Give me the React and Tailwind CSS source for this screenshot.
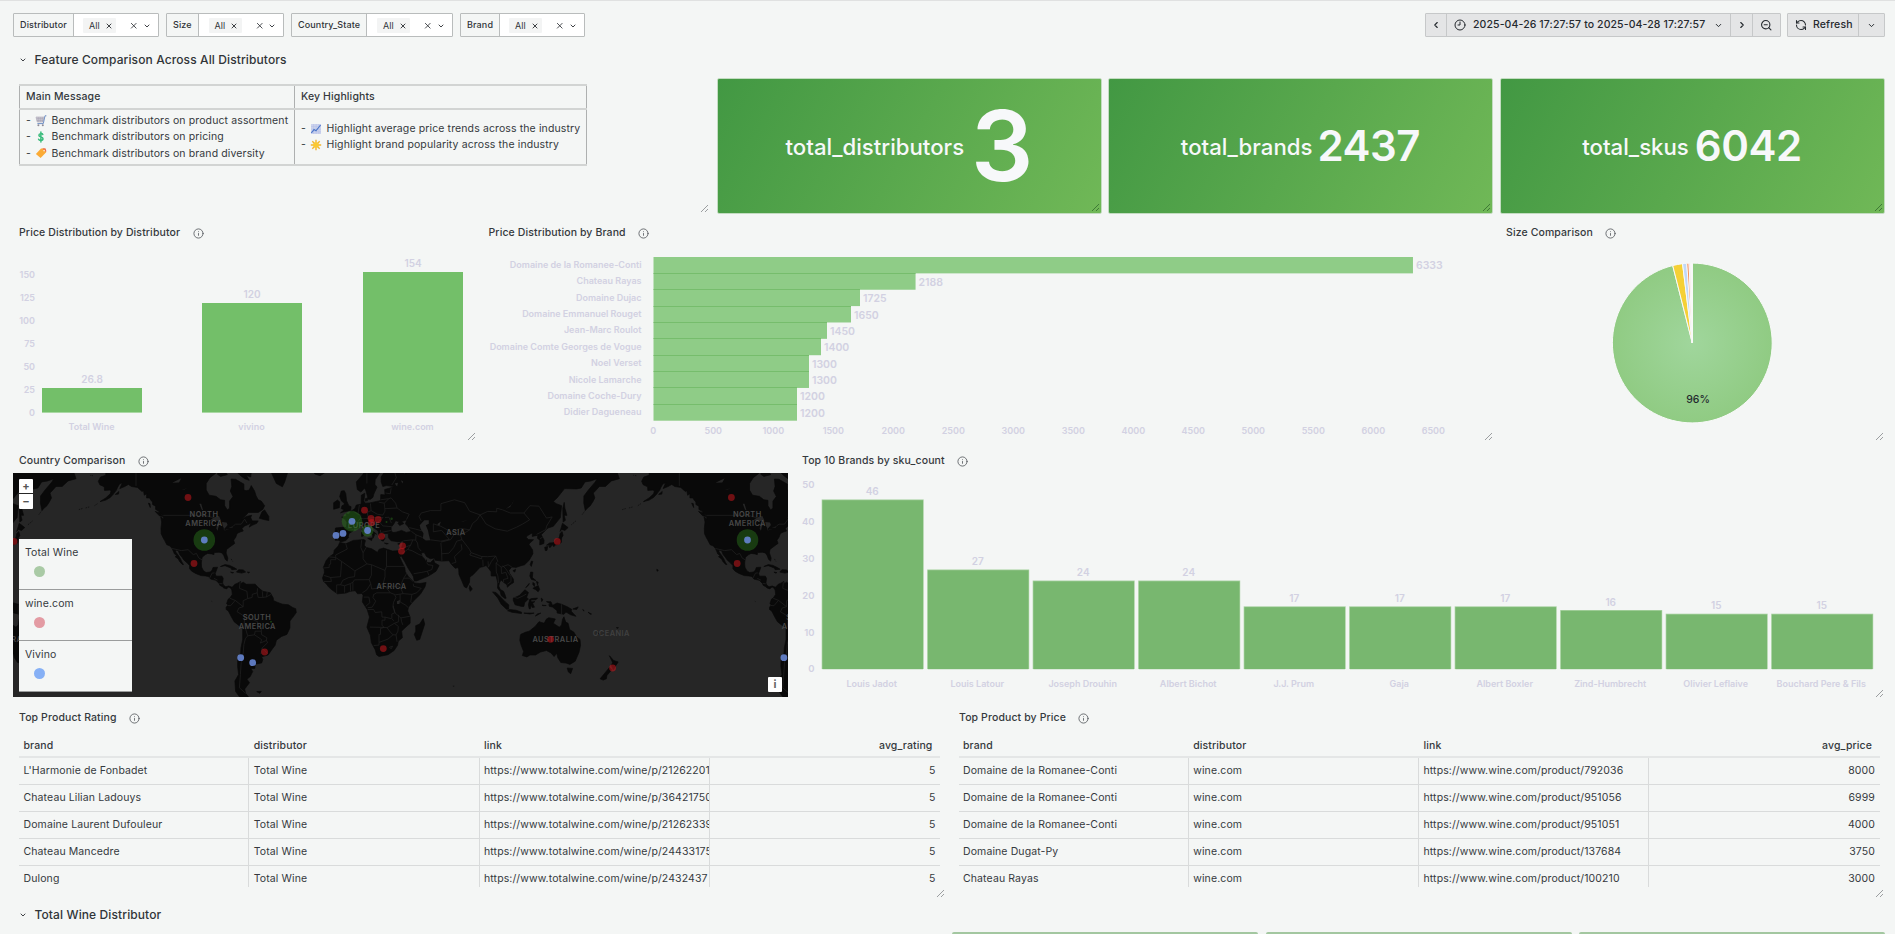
import React from "react";
import { ChevronDown, ChevronLeft, ChevronRight, Clock9, Info, RefreshCw, X, ZoomOut } from "lucide-react";

/* ---------- shared pieces ---------- */

function Handle({ dark = false }) {
  return (
    <svg className="absolute right-[1px] bottom-[1px]" width="9" height="9" viewBox="0 0 9 9" fill="none" stroke={dark ? "#3f7a36" : "#9b9ea0"} strokeWidth="1">
      <path d="M1 8 L8 1 M5 8 L8 5" />
    </svg>
  );
}

function Panel({ title, indent = "pl-[6px]", children }) {
  return (
    <section className="relative min-w-0 overflow-hidden">
      <header className={"flex h-6 items-center gap-[12.5px] pt-[2px] text-[10.5px] font-medium tracking-[0.11px] text-[#35393d] " + indent}>
        <h2>{title}</h2>
        <Info size={11} strokeWidth={1.8} className="text-[#54585c]" />
      </header>
      {children}
    </section>
  );
}

function T({ x, y, size = 9, anchor = "middle", weight = 600, fill = "#d2d1e2", children }) {
  return (
    <text x={x} y={y + size * 0.36} fontSize={size} textAnchor={anchor} fontWeight={weight} fill={fill}>
      {children}
    </text>
  );
}

/* ---------- toolbar ---------- */

function Filter({ label, labelClass, boxClass }) {
  return (
    <div className="flex h-6 rounded-[1px] border border-[#b9bcbc] text-[9px] text-[#303438]">
      <div className={"flex items-center border-r border-[#b9bcbc] pl-[6px] font-medium tracking-[0.13px] " + labelClass}>{label}</div>
      <div className={"flex items-center bg-white pt-[1px] " + boxClass}>
        <span className="flex h-[15px] w-[33px] items-center gap-[5px] rounded-[1px] bg-[#f3f4f4] pl-[6px]">
          All
          <X size={8} strokeWidth={2.8} />
        </span>
        <X size={9.5} strokeWidth={2.2} className="ml-[13px]" />
        <ChevronDown size={8} strokeWidth={2.8} className="ml-[4px]" />
      </div>
    </div>
  );
}

function Toolbar() {
  return (
    <div className="flex h-[36px] items-start justify-between pt-3 text-[#24292e]">
      <div className="flex gap-[7px]">
        <Filter label="Distributor" labelClass="w-[60px]" boxClass="w-[84px] pl-[9px]" />
        <Filter label="Size" labelClass="w-[32px]" boxClass="w-[84px] pl-[9.5px]" />
        <Filter label="Country_State" labelClass="w-[75px]" boxClass="w-[85px] pl-[10px]" />
        <Filter label="Brand" labelClass="w-[39px]" boxClass="w-[84px] pl-[9px]" />
      </div>
      <div className="flex gap-[6px]">
        <div className="flex h-6 divide-x divide-[#c6c8c9] rounded-[1px] border border-[#c6c8c9] bg-[#e4e5e6] text-[10.5px] font-medium tracking-[0.11px]">
          <span className="flex w-[21px] items-center justify-center"><ChevronLeft size={10} strokeWidth={2.6} /></span>
          <span className="flex w-[284px] items-center pl-[7px]">
            <Clock9 size={12} strokeWidth={2} />
            <span className="ml-[7px] w-[233px] whitespace-nowrap">2025-04-26 17:27:57 to 2025-04-28 17:27:57</span>
            <ChevronDown size={9} strokeWidth={2.6} className="ml-[8px]" />
          </span>
          <span className="flex w-[22px] items-center justify-center"><ChevronRight size={10} strokeWidth={2.6} /></span>
          <span className="flex w-[27px] items-center justify-center"><ZoomOut size={12.5} strokeWidth={2.1} /></span>
        </div>
        <div className="flex h-6 divide-x divide-[#c6c8c9] rounded-[1px] border border-[#c6c8c9] bg-[#e4e5e6] text-[10.5px] font-medium tracking-[0.11px]">
          <span className="flex w-[71px] items-center gap-[6px] pl-[7px]">
            <RefreshCw size={12} strokeWidth={2.1} className="-scale-x-100" />
            Refresh
          </span>
          <span className="flex w-[25px] items-center justify-center"><ChevronDown size={9} strokeWidth={2.6} /></span>
        </div>
      </div>
    </div>
  );
}

function RowTitle({ children }) {
  return (
    <div className="flex h-[23px] items-center gap-[7.5px] pl-[6px] text-[12px] font-medium tracking-[0.11px] text-[#303438]">
      <ChevronDown size={8} strokeWidth={2.8} />
      <h1>{children}</h1>
    </div>
  );
}

/* ---------- message table ---------- */

const Cart = () => (
  <svg width="12" height="12" viewBox="0 0 12 12" fill="none" className="shrink-0">
    <path d="M1 2 H9 L8 7 H2.2 Z" fill="#d4d1da" stroke="#aba8b6" strokeWidth=".6" />
    <path d="M3.2 2 V7 M5.2 2 V7 M7.2 2 V7 M1.5 3.7 H8.5 M1.8 5.4 H8.3" stroke="#9b98a8" strokeWidth=".5" />
    <path d="M11.4 .8 H10 L8.3 8.6 H2.4" stroke="#6f8fc4" strokeWidth="1" />
    <circle cx="3.4" cy="10.2" r="1" fill="#8d8a96" />
    <circle cx="7.8" cy="10.2" r="1" fill="#8d8a96" />
  </svg>
);
const Dollar = () => (
  <svg width="12" height="12" viewBox="0 0 12 12" fill="none" stroke="#39bb7b" strokeWidth="1.5" strokeLinecap="round" className="shrink-0">
    <path d="M7.8 3.6 C7.3 2.3 3.9 2.1 3.9 4.2 C3.9 6.3 8 5.5 8 7.8 C8 10 4.1 9.7 3.6 8.2 M5.9 .9 V11.1" />
  </svg>
);
const Tag = () => (
  <svg width="12" height="12" viewBox="0 0 12 12" className="shrink-0">
    <path d="M6 1.6 L10 1.6 L11.2 5.2 L5.6 11 L.9 7.1 Z" fill="#fbab35" />
    <path d="M7.4 1.2 L10.6 1.4 L11.5 4.6 L9.8 4.4 Z" fill="#ee6a4c" />
    <circle cx="9.1" cy="3.6" r=".9" fill="#fde7c4" />
  </svg>
);
const Trend = () => (
  <svg width="12" height="12" viewBox="0 0 12 12" fill="none" className="shrink-0">
    <rect x="1" y="1" width="10" height="10" fill="#ccd3ee" />
    <path d="M3.6 1 V11 M6.2 1 V11 M8.8 1 V11 M1 3.6 H11 M1 6.2 H11 M1 8.8 H11" stroke="#b3bce4" strokeWidth=".5" />
    <path d="M1.3 10 L4 6.6 L6 7.8 L10.6 2" stroke="#4a76c9" strokeWidth="1.2" />
  </svg>
);
const Star = () => (
  <svg width="12" height="12" viewBox="0 0 12 12" fill="none" className="shrink-0">
    <path d="M6 .8 V11.2 M.8 6 H11.2 M2.3 2.3 L9.7 9.7 M9.7 2.3 L2.3 9.7" stroke="#f2b62c" strokeWidth="1.4" />
    <circle cx="6" cy="6" r="2.8" fill="#fbc931" />
  </svg>
);

function Bullet({ icon, children }) {
  return (
    <li className="flex h-[16.4px] items-center whitespace-nowrap">
      <span className="w-[9px]">-</span>
      {icon}
      <span className="ml-[4.5px]">{children}</span>
    </li>
  );
}

function Messages() {
  return (
    <section className="relative pt-[6px] pl-[6px]">
      <table className="h-[82px] w-[568px] border-collapse text-[10.5px] tracking-[0.12px] text-[#35393d]">
        <thead>
          <tr className="h-[24px] text-left">
            <th className="w-[275px] border-x border-y-2 border-x-[#aeb0b0] border-y-[#d2d4d3] pl-[6px] font-medium">Main Message</th>
            <th className="border-x border-y-2 border-x-[#aeb0b0] border-y-[#d2d4d3] pl-[6px] font-medium">Key Highlights</th>
          </tr>
        </thead>
        <tbody>
          <tr>
            <td className="border-x border-b-2 border-x-[#aeb0b0] border-b-[#d2d4d3] pl-[6px]">
              <ul>
                <Bullet icon={<Cart />}>Benchmark distributors on product assortment</Bullet>
                <Bullet icon={<Dollar />}>Benchmark distributors on pricing</Bullet>
                <Bullet icon={<Tag />}>Benchmark distributors on brand diversity</Bullet>
              </ul>
            </td>
            <td className="border-x border-b-2 border-x-[#aeb0b0] border-b-[#d2d4d3] pl-[6px]">
              <ul>
                <Bullet icon={<Trend />}>Highlight average price trends across the industry</Bullet>
                <Bullet icon={<Star />}>Highlight brand popularity across the industry</Bullet>
              </ul>
            </td>
          </tr>
        </tbody>
      </table>
      <Handle />
    </section>
  );
}

function Stat({ label, value, valueClass }) {
  return (
    <section className="relative flex items-center justify-center overflow-hidden rounded-[2px] border border-[#c3dcc1] bg-[linear-gradient(120deg,#429843,#70b857)] font-medium text-[#f7f8fa]">
      <span className="pt-[2px] text-[22.2px]">{label}</span>
      <span className={"leading-none font-semibold " + valueClass}>{value}</span>
      <Handle dark />
    </section>
  );
}

/* ---------- charts ---------- */

function DistributorChart() {
  const bars = [
    ["Total Wine", "26.8", 42, 388],
    ["vivino", "120", 202, 303],
    ["wine.com", "154", 363, 272],
  ];
  return (
    <Panel title="Price Distribution by Distributor">
      <svg className="block" width="464" height="198" viewBox="13 244 464 198">
        {[0, 25, 50, 75, 100, 125, 150].map((v) => (
          <T key={v} x={35} y={413 - v * 0.92} anchor="end">{v}</T>
        ))}
        {bars.map(([name, v, x, y]) => (
          <g key={name}>
            <rect x={x} y={y} width="100" height={412 - y} fill="#73bf69" />
            <rect x={x} y="412" width="100" height="1" fill="#a9d8a3" />
            <T x={x + 50} y={y - 8.5} size={10}>{v}</T>
            <T x={x + 49.5} y={427}>{name}</T>
          </g>
        ))}
      </svg>
      <Handle />
    </Panel>
  );
}

function BrandPriceChart() {
  const rows = [
    ["Domaine de la Romanee-Conti", 6333],
    ["Chateau Rayas", 2188],
    ["Domaine Dujac", 1725],
    ["Domaine Emmanuel Rouget", 1650],
    ["Jean-Marc Roulot", 1450],
    ["Domaine Comte Georges de Vogue", 1400],
    ["Noel Verset", 1300],
    ["Nicole Lamarche", 1300],
    ["Domaine Coche-Dury", 1200],
    ["Didier Dagueneau", 1200],
  ];
  const ticks = Array.from({ length: 14 }, (_, i) => i * 500);
  return (
    <Panel title="Price Distribution by Brand" indent="pl-[5.5px]">
      <svg className="block" width="1011" height="198" viewBox="483 244 1011 198">
        {rows.map(([name, v], i) => {
          const y = 257 + i * 16.37;
          return (
            <g key={name}>
              <rect x="653.5" y={y} width={v * 0.12 - 0.5} height="16.37" fill="#8fcc87" />
              {i > 0 && <rect x="653.5" y={Math.round(y - 0.5)} width={v * 0.12 - 0.5} height="1" fill="#76bd6c" />}
              <T x={641.5} y={y + 7.7} anchor="end">{name}</T>
              <T x={656 + v * 0.12} y={y + 8.7} size={10.5} anchor="start">{v}</T>
            </g>
          );
        })}
        {ticks.map((v) => (
          <T key={v} x={653.3 + v * 0.12} y={430.8}>{v}</T>
        ))}
      </svg>
      <Handle />
    </Panel>
  );
}

function SizePie() {
  const cx = 1692.3, cy = 343, r = 79.9;
  const pt = (deg) => {
    const a = (deg * Math.PI) / 180;
    return (cx + r * Math.sin(a)).toFixed(2) + " " + (cy - r * Math.cos(a)).toFixed(2);
  };
  const slices = [
    [0, 345.8, "url(#pieGreen)"],
    [345.8, 353, "#f5d036"],
    [353, 356, "#c0d8f8"],
    [356, 357.7, "#f4935f"],
    [357.7, 358.8, "#f6c4c4"],
    [358.8, 359.5, "#d8cdf0"],
    [359.5, 360, "#f8f8f8"],
  ];
  return (
    <Panel title="Size Comparison">
      <svg className="block" width="385" height="198" viewBox="1500 244 385 198">
        <defs>
          <radialGradient id="pieGreen" gradientUnits="userSpaceOnUse" cx={cx} cy={cy} r={r}>
            <stop offset="0" stopColor="#a0d69c" />
            <stop offset="1" stopColor="#90cb83" />
          </radialGradient>
        </defs>
        {slices.map(([a, b, fill]) => (
          <path key={a} d={`M${cx} ${cy} L${pt(a)} A${r} ${r} 0 ${b - a > 180 ? 1 : 0} 1 ${pt(b)} Z`} fill={fill} stroke="#f9faf9" strokeWidth="1" />
        ))}
        <T x={1698} y={399.2} size={10.5} weight={500} fill="#24292e">96%</T>
      </svg>
      <Handle />
    </Panel>
  );
}

function SkuChart() {
  const data = [
    ["Louis Jadot", 46], ["Louis Latour", 27], ["Joseph Drouhin", 24], ["Albert Bichot", 24], ["J.J. Prum", 17],
    ["Gaja", 17], ["Albert Boxler", 17], ["Zind-Humbrecht", 16], ["Olivier Leflaive", 15], ["Bouchard Pere & Fils", 15],
  ];
  return (
    <Panel title="Top 10 Brands by sku_count" indent="pl-[7px]">
      <svg className="block" width="1090" height="227" viewBox="795 472 1090 227">
        {[0, 10, 20, 30, 40, 50].map((v) => (
          <T key={v} x={814.5} y={669 - v * 3.686} size={9.5} weight={600} anchor="end">{v}</T>
        ))}
        {data.map(([name, v], i) => {
          const x = 821.7 + i * 105.5;
          const top = 669 - v * 3.686;
          return (
            <g key={name}>
              <rect x={x} y={top} width="102" height={669 - top} fill="#a6d19f" />
              <rect x={x + 0.7} y={top + 0.8} width="100.6" height={668.4 - top} fill="#78b76f" />
              <T x={x + 50.5} y={top - 8} size={10}>{v}</T>
              <T x={x + 50} y={684}>{name}</T>
            </g>
          );
        })}
      </svg>
      <Handle />
    </Panel>
  );
}

/* ---------- world map ---------- */

const PERIOD = 543.33;
const px = (lon) => 348.8 + (lon * PERIOD) / 360;
const py = (lat) => 600.4 - 86.47 * Math.log(Math.tan(Math.PI / 4 + (lat * Math.PI) / 360));
function line(flat) {
  let d = "";
  for (let i = 0; i < flat.length; i += 2) d += (i ? "L" : "M") + px(flat[i]).toFixed(1) + " " + py(flat[i + 1]).toFixed(1);
  return d;
}

const LAND = [
  // North and Central America
  [-168,66,-162,66.5,-163,64.5,-161,64.5,-161,63.5,-164.5,63,-166,61.7,-165,60.6,-162,59.9,-161.9,58.7,-158.5,58.8,-157.5,58.6,-158,57.5,-161,56,-164.8,54.6,-161,55.2,-158,56.2,-156,57.4,-154,58.8,-153.3,59.6,-152,60.8,-150,61.2,-151.7,59.3,-148.5,60,-146,60.7,-144,60,-140,59.7,-137,58.3,-136,58.6,-135.5,57,-134,57.5,-134,56,-132,56,-131,55,-130,54.5,-130,53.5,-128,52.8,-128,51.5,-126,50.8,-125,50,-123.3,49,-122.5,47.3,-124.6,48.3,-124,46,-124.4,43,-124.3,40.3,-123,38.2,-122,36.8,-120.6,34.6,-118.4,33.9,-117.1,32.5,-116,30.5,-115.6,29.5,-114,28.5,-115,27.8,-113,26.5,-112.2,25,-110.3,23.2,-109.5,23.1,-110.5,24.5,-111.5,26.5,-112.8,28.3,-114.7,30.5,-114.8,31.7,-113,31.2,-112,29,-110.5,27.5,-109.3,25.9,-107,24,-105.5,22.5,-105.5,20.5,-104,19,-101.5,17.6,-98,16.2,-95,16,-93,15.7,-91.5,14,-88,13.2,-87.5,12.8,-85.8,11,-85.5,10,-83.7,9,-82.8,8.2,-81,7.6,-80.3,8.4,-79.5,8.9,-78.4,8.2,-77.4,7,-77,8.6,-79.5,9.5,-81.5,9,-83,10,-83.6,11.5,-83.2,14.5,-84,15.8,-88,15.8,-88.5,17.5,-87.5,20,-87,21.5,-90,21.3,-90.6,19.7,-91.8,18.5,-94.5,18.2,-96.2,19.2,-97.5,21.5,-97.7,24,-97.2,27.5,-95,29,-93.5,29.7,-91,29.4,-89.3,29,-89.3,30.2,-86,30.4,-84,30,-82.8,28.5,-81.8,26.2,-80.5,25.2,-80.2,27,-81.3,30,-81,32,-78,33.9,-75.6,35.3,-76.3,37,-75,38.5,-74,40.5,-72,41.2,-70,41.7,-70.8,43,-69,44.2,-66.8,44.8,-64.8,45.6,-66,43.6,-64,44.5,-61,45.4,-60,46.5,-64,46.5,-65,48,-64.4,49,-68,48.5,-71,47,-66.5,50.2,-60,50.2,-57,51.5,-55.8,53,-58,54.8,-60,55.3,-61.5,56.8,-62.5,58.5,-64.6,60.3,-66,58.8,-68,58.6,-69.5,58.8,-69.5,60.8,-71,61.2,-75,62.3,-78,62.4,-77.5,60,-78.5,58.5,-76.7,56.5,-79,54.8,-79,52,-80.5,51.3,-82.3,53,-82.3,55.1,-85,55.3,-88,56.6,-92.5,57,-94.5,58.8,-94.5,61,-92,62.8,-88,64.2,-86,66,-90,68,-100,70,-130,71,-168,71],
  [-84,66,-81,64,-80.5,63.7,-85,63.2,-87,63.8,-86,66],
  [-78,64.6,-74,64.4,-72,63.5,-69,62.5,-66,62,-68,63.5,-65,63,-64.5,64.8,-62,66,-70,70,-85,70],
  [-59.3,47.7,-55.5,47,-53,46.7,-53,48.5,-55.8,51.3,-57.5,50.5],
  [-128.3,50.7,-125,50,-123.4,48.5,-125.5,48.8],
  [-132.8,54,-131.7,53.8,-131.5,52.3],
  [-154.7,57.3,-152.3,58.3,-152.6,57.4],
  [-85,21.9,-82,23.1,-79,22.6,-76,21.2,-74.2,20.2,-77.5,19.9,-78,20.9,-82,22.4],
  [-74.4,18.4,-73,19.9,-70,19.8,-68.4,18.5,-71,17.8],
  [-78.3,18.4,-76.3,18.1,-77.3,17.8],
  [-67.2,18.4,-65.7,18.3,-66.5,17.9],
  [-54,67,-51,64,-48,61,-44,59.9,-42.5,61.5,-40,65,-38,68],
  [-24,65.5,-22.5,63.9,-19,63.4,-14,64.8,-14,66.5,-22,66.5],
  // South America
  [-77.4,8.6,-75.5,10.6,-74,11.2,-71.7,12.4,-71.5,11,-70,12,-68,10.6,-62,10.7,-60,8.5,-57,6,-52,5,-50,1.5,-50,0,-48,-1,-44,-2.5,-40,-2.9,-37,-4.8,-35.2,-5.5,-34.8,-8,-37,-11,-39,-13.5,-39,-18,-41,-22,-44.5,-23.2,-48,-25.5,-48.8,-28.5,-51,-31,-53.5,-34,-57.5,-34.9,-58.4,-34,-57,-36.5,-57.7,-38.2,-62,-38.9,-62.3,-41,-65,-41,-63.7,-42.5,-65.3,-45,-67.5,-46.2,-65.8,-47.8,-69,-50.5,-68.4,-52.3,-65.2,-54.7,-68,-55.5,-72,-54,-75,-51.5,-75.5,-47,-73,-44,-73.7,-40,-73.6,-37,-71.6,-33,-71.4,-30,-70.3,-25,-70.3,-18.3,-72,-17,-76,-14,-78,-10.5,-79.8,-7,-81.2,-6,-81.2,-4.5,-80,-3,-81,-2.2,-80,0.8,-78.8,1.5,-77.2,4,-77.5,7],
  [-61,-51.6,-58,-51.5,-59,-52.3],
  // Africa
  [-6,35.8,-2,35.1,3,36.9,10,37.3,11,36.8,10.2,34.3,11.5,33.1,15.2,32.3,19,30.3,20,32,23,32.7,29,31,32.3,31.2,32.6,29.9,34,27,35.5,24,37.2,21,37.4,18.8,39.5,15.5,43,12.3,43.3,11.5,47,11.1,51.2,11.8,50.5,9,47.5,4.2,42.5,-0.8,39.5,-4.5,39,-7,40.6,-11,40.6,-15,36.5,-18.5,35,-20,35.5,-24,32.8,-26,32.3,-28.5,30,-31.5,26,-33.8,20,-34.8,18.4,-33.9,17.5,-31,15,-27,14.3,-22.5,12,-17.5,13.7,-11,12.2,-6,9,-1,9.5,3.5,8.5,4.6,5.8,4.4,4.3,6.4,1,6,-2,4.8,-7.5,4.4,-11,6.8,-13.3,8.8,-15,11,-16.7,12.5,-17.4,14.7,-16.2,18,-16.3,20.5,-17,21,-15,25.5,-13,27.7,-10,29.5,-9.7,31.5,-7,33.8],
  [49.3,-12,50.3,-15.5,47,-25,45,-25.5,43.4,-22,44.4,-20,44.3,-16.5,47,-15.5],
  // Eurasia
  [-9,37,-8.8,38.6,-9.4,39,-8.8,43.2,-4,43.5,-1.6,43.4,-1.2,45.8,-2.5,47.3,-4.7,48.2,-1.6,48.7,-1.8,49.7,0,49.5,1.6,50.8,4,51.8,5,53.3,8.2,53.6,8.3,57,10.6,57.7,10.3,56,9.9,54.8,11,54,14,54.1,18.5,54.7,21,55,21.2,57.2,24,57.1,23.8,59,28,59.6,30,60,25,60.3,22.5,60,21.5,61.5,21.4,63,24.5,65,22,65.7,21,64.5,17.5,62.2,17.3,60.7,18.7,59.8,16.6,57.5,16,56.2,14.3,55.5,12.9,55.5,11.3,58.6,10.5,59.5,8,58.1,5.6,59,5,61.5,9,63.6,13,66,20,70,34,66.5,40,66,38,64,36,64.3,37,63.8,40,64.7,42,66.5,60,72,180,72,190,66.5,187.5,64.4,180,65,177.5,64.7,179.3,62.5,174,61.8,170,60,166,60,163.3,58.5,162,57.8,163,56,161.8,54.7,160,53,158,52,156.7,51,155.7,54,155.8,56.7,159,59,163.3,61.5,164.5,62.5,160.5,61.8,156.5,61.5,154,59.5,151,59.2,143,59.3,138,56,135.5,54.7,137.5,53.8,141,53,140.5,50,140.2,48,135.5,44,132,43.2,130.7,42.3,127.5,39.8,129.4,37,129.2,35.2,126.5,34.5,126.6,37,125,38,125.2,39.6,121.5,39,121.7,40.8,118,39.2,117.7,38.5,119,37.3,122.4,37.2,120,35.5,119.3,34.8,121.8,31.7,122,29.5,119.5,25.7,116.5,23,113.5,22.2,110.5,21.2,109.7,21.5,108,21.6,106,19.5,106.5,17.7,109,14,109.2,11.8,107,10.4,105,8.7,104.8,10.3,102.5,12,100.9,13.4,100,12,99.3,9.5,100.4,7.2,102.5,6,103.4,4,104.2,1.4,103.3,1.4,101,3.2,100.3,5.8,98.5,8.2,98.7,11.5,97.6,16,95.3,15.9,94.3,16,94.3,18.7,92,21.5,91,22.5,89,21.8,87,21.4,85,19.5,82.3,16.7,80.2,15.3,80,12,79,10,78,8.2,76.5,9,74.8,13,73,17,72.8,20,72.5,21.3,70.5,20.8,69,22.3,67.5,23.8,66.5,25.4,61.6,25.2,57.3,25.7,56.5,27,54,26.6,51.5,27.9,50,30.2,48,30,48.5,28,50.2,26.5,50.8,24.8,51.4,26,51.6,24.3,54,24.2,56.3,26.2,56.8,24.2,59.8,22.5,57.8,19,55,17.2,52,15.6,48,14,45,12.8,43.4,12.7,42.8,15.5,42,17,39.2,21,37,25,35,28,34.9,29.4,34.3,27.8,32.6,29.9,32.4,31.2,34.3,31.3,35,33,35.9,35.5,36.1,36.8,34,36.2,32,36.2,30.5,36.5,28,36.7,26.3,38.3,26.2,40,29,40.9,31.3,41.1,35,42,38,41,41.5,41.5,39,44,37.5,45.2,38.5,47,35,46.2,36.5,45.3,33.7,44.4,32.5,45.4,33.5,46.1,31,46.6,29.7,45,28,43.5,28,41.8,29,41.1,26.5,40.4,23.5,40.5,22.8,40,24,38,22.8,36.5,21.5,37,20,39.5,19.4,41.8,15.5,43.8,13.8,45,12.4,45.3,12.4,44.2,14,42.5,16,41.6,18.4,40.1,17,40.5,16.8,39.3,16,38,15.8,39.6,13.7,41.2,11,42.4,8.8,44.4,6.5,43.1,3.2,43.2,3,41.8,0.2,40.5,-0.3,39,0,38.6,-2,36.8,-5.5,36.1,-6.5,37],
  [-5.5,50.1,-3,50.5,1.2,51.1,1.5,52.6,0,53,-1.5,55,-2,57.5,-3,58.6,-5,58.5,-6,56.5,-4.8,54.8,-3,54,-3.2,53.3,-4.5,53,-5,51.8,-3,51.4],
  [-10,51.6,-6.3,52.2,-6,54.5,-7.5,55.2,-10,54.2],
  [11,54.8,12.4,55,12.5,56,11,55.7],
  [12.5,38,15.6,38.2,15.1,36.8],
  [8.4,41,9.6,41,9.6,39.2,8.5,39],
  [8.7,42.6,9.4,43,9.4,41.5],
  [23.6,35.5,26.2,35.2,25,34.9],
  [32.4,35,34.4,35.6,33.5,34.7],
  // Asia-Pacific islands
  [131,34.3,133,35.5,136,35.7,137,37.2,139.5,38.3,140,40.5,141.3,41.4,142,39.5,141,38.2,140.8,35.8,139,34.8,136.8,34.5,135.8,33.5,135,34.6],
  [129.8,33.2,131.8,33.6,131.3,31.4,130.2,31.3],
  [132.5,34,134.6,34.2,133.2,32.9],
  [140,41.5,141.6,45.4,145.3,43.4,143.2,42,141,42.5],
  [142,46,143.5,46.8,142.7,49,144.5,49,143.2,52,142.7,54.3,141.8,52],
  [120.2,23,121,25.2,121.9,25,120.9,22],
  [108.7,19.3,110.5,20.1,110,18.4],
  [79.8,8,80.2,9.8,81.8,7.5,80.5,6],
  [120.5,18.5,122,18.3,121.6,15,124,13,121,13.8,119.9,16],
  [122,8,125.5,9.8,126.4,7.2,125.4,5.7,124,7],
  [122,11.8,123.2,11,123,9.2,122,10.5],
  [124.3,12.5,125.5,12,125,10.2],
  [117.2,8.4,119.5,11.2,119.3,10.3],
  [109,1.5,111.5,2.5,113,3.2,116.7,7,119,5.2,117.8,2,119,1,116.5,-1.5,116,-4,114.5,-4,110.2,-2.9,109,0],
  [120.3,-5.5,119.5,-5.5,119,-3,119.8,0.5,121,1.2,125,1.5,124,0.4,120.5,0.4,121,-1,123.3,-0.8,121.8,-1.9,123,-4.5,121.5,-4.7,120.8,-2.8],
  [95.3,5.6,97.5,5.2,100.5,2.2,103.7,-1,106,-3,105.8,-5.8,104.5,-5.8,101,-2.5,98.7,1.6],
  [105.2,-6.8,106.5,-6,110.8,-6.5,114.5,-7.8,114.4,-8.7,108,-7.8],
  [116,-8.4,119,-8.4,122.8,-8.4,120,-9],
  [123.6,-10.3,125,-8.9,127.2,-8.4,125,-9.6],
  [127.5,1.5,128.6,0.5,127.8,-0.8],
  [128,-3.2,130.8,-3.4,129,-3.5],
  [131,-0.8,134,-0.9,135,-3.3,138,-1.7,141,-2.6,145,-4.3,147.8,-6,147.2,-7,150.5,-10.5,147,-9.5,144,-7.7,142.5,-9.2,138,-8.3,138,-6.8,135,-4.4,133,-4,132.5,-2.8,134,-2.5],
  [148.5,-5.7,152,-4.3,151,-6],
  [155,-6,156,-6.8,155.5,-6.9],
  [158.5,-7.8,160.8,-9,160,-9.2],
  [164,-20.2,167,-22.2,166,-22],
  [177.3,-17.8,178.6,-17.8,178,-18.2],
  // Australia and New Zealand
  [113.7,-22.5,114,-21.9,117,-20.7,119.5,-20,122.2,-18,123.5,-17,126,-14,129.5,-15,130.8,-12.4,132.5,-11.4,136.8,-12.2,135.5,-15,139.5,-17.5,141,-16,141.6,-12.5,142.5,-10.8,143.7,-14.2,145.3,-15,146.3,-19,149,-20.5,151,-23.5,153.2,-25,153.5,-28.5,152.5,-32.5,150,-37.3,146.5,-39,144,-38.3,140.5,-38,138.5,-35.5,137.8,-33,136,-34.8,134,-32.8,131,-31.5,127,-32.3,123.7,-34,120,-34,118,-35,115,-34.3,115.8,-32,114.2,-28.5,113.3,-25.5],
  [144.7,-40.8,148.3,-41,147,-43.6,145.5,-42.8],
  [172.7,-34.4,175.5,-37,178.5,-37.7,177,-39.5,175.3,-41.6,174,-39.5,174.8,-38],
  [172.7,-40.6,174.2,-41.7,171,-44.5,170.7,-46,168.5,-46.6,166.5,-46,170,-43],
  [-155.9,20.2,-154.9,19.5,-155.8,19],
];

const ISLES = [
  [-166.5,53.8,-168.5,53], [-172,52.5,-174.5,52.1], [-176.5,51.9,-179,51.4], [-169.5,63.4,-171.5,63.5],
  [156.1,50.6,154.5,49.2], [150.5,46.5,147,44.5], [-78,26.5,-77,25], [-91,-0.5,-90.5,-0.8], [69,-49.3,70,-49.3], [-37,-54.3,-36,-54.6],
];

const LAKES = [
  [-92,46.7,-89.5,48,-86,48.7,-84.6,46.7,-87,46.5],
  [-87.8,43,-87.2,44.8,-85.3,45.8,-86.4,43.5,-86.9,41.8],
  [-84,46,-81,45.8,-80.3,44.6,-81.7,43.4,-82.4,43,-83.5,44],
  [-83.3,41.7,-80.3,42.5,-79,42.8,-81.5,42.3],
  [-79.7,43.3,-76.5,44,-77,43.4],
  [-99,53.8,-97.8,53.8,-96.5,51,-97.5,51.5],
  [-117,61.2,-111,62.6,-112.5,61.3],
  [-111,58.8,-107,59.4,-109,59],
  [47,44.5,50,46.8,53,46.8,53,45.2,51,44.5,52.5,42,53,40,54,37,51,36.8,49,38,49.5,40.5,47.5,43],
  [58.5,45,61,46.2,60,44.3],
  [103.8,51.6,107,52.6,109.8,55.6,108,53.5],
  [31.8,-0.5,34,0.2,33.5,-2.4,32,-2.3],
  [29.2,-3.5,29.6,-3.6,31,-8.5,30.4,-8],
  [30.5,61,32.5,61.2,32,60],
  [34.5,62,36,61.6,35.5,61],
  [74,46,78.5,46.7,76,46.5],
];

const BORDERS = [
  [-141,60.2,-141,70], [-123,49,-95.2,49,-92,48.3,-89.5,48], [-82.5,42.3,-83,45.8], [-76.5,44.2,-75,45,-71.3,45,-69,47.3,-67.5,45.5],
  [-117.1,32.5,-111,31.3,-106.5,31.8,-103,29,-101,29.7,-99.3,27,-97.2,25.9], [-92.2,14.6,-90.5,17.8,-89,17.9], [-89.3,14.4,-87,13.3], [-85.7,11.1,-83.7,10.9],
  [-72,12,-72.5,8,-67.5,6,-67,1.2,-70,-0.2,-70,-4.2,-72.8,-5,-74,-7.5,-70.6,-9.5,-69,-11,-69.5,-17.5,-70.3,-18.3],
  [-78.8,1.4,-75.3,0,-70,-4.2], [-80.3,-3.4,-78.3,-3.5,-75.3,0], [-67,1.2,-64,2,-64,4,-60.7,5,-60,2,-57,2,-54.5,2.3,-51.6,4], [-60.7,5,-60.5,8], [-57.3,6,-57,2], [-54,5.8,-54.5,2.3],
  [-69,-11,-65,-12,-60.5,-14,-60,-16.3,-58,-17.5,-58,-20,-62,-20,-62.5,-22.2,-67,-22.8,-68.5,-24.5,-69.5,-28,-70,-33,-71.3,-38,-71.8,-44,-72.5,-50,-68.4,-52.3],
  [-68.7,-17.5,-67,-22.8], [-58,-20,-57.7,-22.2,-54.3,-24,-54.6,-25.6,-58.6,-27.2,-57.7,-25.2,-62.5,-22.2], [-54.6,-25.6,-53.8,-27,-57.6,-30.2,-58.2,-33.5], [-57.6,-30.2,-53.4,-33.5],
  [-2,35.1,-1,32.2,-8.7,28.8,-8.7,27.3,-13,27.7], [-8.7,27.3,-4.8,25,1,21.2,4,19.2,12,23.5,9.5,26.5,9.5,30,8,33,8.5,37], [9.5,30,11.5,33.1], [12,23.5,15,23,24,19.5,25,22,25,31.5], [25,22,37,22],
  [-17,21,-13,21.3,-13,23,-12,23.4,-12,26,-8.7,26,-8.7,27.3], [-4.8,25,-5.5,15.5,-12,15], [-16.3,16.3,-12,15,-11.5,12.4,-16.5,12.4], [-8,10.3,-5.5,10.3,-4,13.2,0,15,3.8,15.5,4.2,19.2], [-2.8,9.5,-2.8,5.1], [1,11,1.2,6.1], [2.7,12,2.7,6.4], [-8,10.3,-8,4.5], [-5.5,10.3,-2.8,9.7,1,11,2.7,12,3.8,13.5,13.5,13.6,15,16.5,15,23],
  [13.5,13.6,14.5,11,12,7,9,5], [14.5,11,15.2,7.5,18.5,8,22.8,11,24,15.5,24,19.5], [22.8,11,24.5,8.7,27.5,5,31,3.7,34,4.2,36,4.5,41.8,4,45,5,48,8,43,9.3,42.7,11], [36,4.5,34,9,36.3,14.5,38.5,17.8], [36.3,14.5,40,14.6,42.7,12.4], [24.5,8.7,34,9.5],
  [16,3.5,18.5,5,27.5,5], [16,2,16.5,3.5], [9.8,2.2,13.3,2.2,14,-1.5,11.2,-4], [16,2,17.8,-0.5,15.5,-4.5,12.5,-4.8], [12.5,-6,16.5,-6,17.5,-8,21.8,-7.5,22,-11,24,-11,24,-13,22,-13,22,-16.2,23.3,-17.6,14,-17.4], [30.5,3.5,31.2,2,29.6,-1.3,29.2,-4.3,30.5,-8.2,28.5,-9,28.5,-12,29.8,-13.4], [34,4.2,34,-1,37.7,-3.2,39.3,-4.7], [41.8,4,41,-1,41.6,-1.7], [30.5,-8.2,34.5,-11.5,40.4,-10.5], [33,-9.5,33,-14,30.2,-15], [34.5,-11.5,35,-14,35.8,-16], [24,-11,28,-12], [23.3,-17.6,25.3,-17.8,30.2,-15,32.8,-17,32.5,-20,31.3,-22.3,32,-26.5], [25.3,-17.8,27.5,-20.5,29.3,-22.2,31.3,-22.3], [29.3,-22.2,26,-24.8,20,-26.8,20,-22,21,-22,21,-18.3,23.3,-17.6], [20,-26.8,20,-28.4,16.5,-28.6], [27,-29.6,29,-29,28,-30.5,27,-29.6],
  [-7,42,-6.8,38,-7.4,37.2], [-1.7,43.3,3.1,42.4], [2.5,51,6,49.5,8,49,7.6,47.6,6,46.3,7.5,43.8], [6,49.5,7,53.3], [7.6,47.6,9.6,47.5,13,47.7,12.2,50.3,14.8,51,14.3,53.9], [14.8,51,18.8,49.5,22.5,49.1,24,50.8,23.5,54,19.8,54.4], [13.7,46.5,17,46,18.9,45.9,22.8,48,17,48,13,47.7], [22.5,44.2,28.5,43.8], [21,42.3,21,40.9,26.2,41.7,28,42], [15.8,45,19,45,20.3,46.1,22.5,44.2], [28.2,45.5,26.6,48.2,24,48], [23.5,54,26.5,55.7,28,56,31,54,32,52.1,24,51.8], [32,52.1,35.5,50.5,40,49.5,38.2,47.1], [21,55.3,26.5,55.7], [24.3,57.8,27.5,57.5,28,59.4], [28.5,60.5,31.5,62.8,30,65], [12,61,12,64,14.5,66],
  [40,43.4,44,42.7,48.5,41.8], [41.5,41.5,44.5,39.8,44.3,37,42.4,37.2,36.2,36.7], [44.5,39.8,48.9,38.4], [42.4,37.2,41,34.4,35.7,32.7], [41,34.4,39,32,34.9,29.4], [39,32,42,31.2,46.5,29.1,48.4,28.5], [44.3,37,45.5,35.5,46,33,48,31], [43,17.4,48,18.2,52,19,55,20,55.7,22.5,52.5,23,51.6,24.3], [52,19,53,16.6],
  [48,46.5,46.6,48.5,48,50,54,51,61,51,61,53.8,70,55.3,76.8,54.2,80,50.8,87,49.2,85,47,82,45.3,80.2,42.3,74,43,68,41,66,42,61,44,56,45.2,56,41.3,61.5,42,66.6,37.5,61,36.5,54,37.2], [80.2,42.3,74,39.5,75,37.3,80,32,81,30.2,88,27.9,92,27.8,97.3,28.2,98.7,25,97.6,24,101,21.5,105.5,23,108,21.6], [74,39.5,70,40.2,67.5,37.3,61,36], [61,35.5,61.5,31,61.7,25.2], [61.5,29.5,66.3,29.8,69.5,33,71.5,36.5,75,37.3], [74.5,34.8,75,32,70,27.8,71,24.5,68.2,23.7], [81,30.2,80.2,28.8,88,26.5,88.2,27.9], [88.8,26,89,22], [92.3,25,92.5,21.5,94.5,25,97.3,28.2], [87,49.2,92,50.7,98,50.5,98,52,102,51.3,107,50,116,50,119.8,47,115,45,111,43.5,105,41.6,97,42.8,91,45.1,87,49.2], [116,50,120,53,126,52.8,131,47.8,134.8,48.3,131,44,130.6,42.4], [124.4,40,130.6,42.4], [126.6,37.8,128.4,38.6],
  [97.6,24,97.7,18.5,98.8,16,99.2,11.5], [101,21.5,101.2,17.5,104,18.3,105.5,14.4,102.5,13.7,102.6,12], [102,22.4,104,20.5,107.5,15.5,107.5,12.3,105,10.7], [109.6,2,112,1.4,115.5,3,117.6,4.2], [141,-2.6,141,-9.1],
];

const RED = [[188, 497.5], [194, 563.5], [364.5, 510.2], [371, 518.5], [371.6, 522.5], [378.2, 519.5], [381.6, 536.3], [264.6, 652], [383.3, 648.6], [14, 541.4], [402.6, 545.8], [401.5, 551.2], [557.3, 541.4], [550.7, 639.3], [612.6, 668], [731.4, 497.5], [737.2, 563.5]];
const GREEN = [[204.3, 540, 10.8], [747.5, 540, 10.8], [352, 521.3, 10.3], [367.5, 530.7, 6], [271, 621.8, 1], [391.6, 518.7, 1.2], [386.5, 522, 1]];
const BLUE = [[204.3, 540], [352, 521.3], [367.6, 530.5], [336, 535.4], [343, 533.4], [240.7, 657.7], [252.7, 662.7], [747.5, 540], [783.9, 657.7]];
const LABELS = [
  ["NORTH", 204, 514.3], ["AMERICA", 204, 523.3], ["SOUTH", 257, 617], ["AMERICA", 257.3, 626], ["EUROPE", 364, 525], ["AFRICA", 391.5, 586.7],
  ["ASIA", 455.8, 531.8], ["AUSTRALIA", 555.5, 639.7], ["OCEANIA", 611.3, 633.6], ["NORTH", 747.3, 514.3], ["AMERICA", 747.3, 523.3],
  ["SOUTH", 800.5, 617], ["AMERICA", 800.5, 626], ["AUSTRALIA", 12.2, 639.7],
];

function WorldMap() {
  const land = LAND.map((p) => line(p) + "Z").join("");
  const isles = ISLES.map(line).join("");
  const lakes = LAKES.map((p) => line(p) + "Z").join("");
  const borders = BORDERS.map(line).join("");
  return (
    <svg className="block" width="775" height="224" viewBox="13 473 775 224">
      <rect x="13" y="473" width="775" height="224" fill="#262626" />
      <defs>
        <g id="world">
          <path d={land} fill="#090909" stroke="#090909" strokeWidth=".7" strokeLinejoin="round" />
          <path d={isles} fill="none" stroke="#111" strokeWidth=".9" strokeDasharray="1.4 .9" />
          <path d={borders} fill="none" stroke="#222" strokeWidth=".7" />
          <path d={lakes} fill="#262626" />
        </g>
      </defs>
      {[-PERIOD, 0, PERIOD].map((dx) => (
        <use key={dx} href="#world" x={dx} />
      ))}
      {LABELS.map(([t, x, y], i) => (
        <text key={i} x={x} y={y + 2.7} fontSize="7.4" fontWeight="600" letterSpacing=".45" textAnchor="middle" fill={t === "OCEANIA" ? "#404040" : "#484848"}>{t}</text>
      ))}
      {GREEN.map(([x, y, r], i) => <circle key={i} cx={x} cy={y} r={r} fill="#2c7a1c" fillOpacity=".45" />)}
      {RED.map(([x, y], i) => <circle key={i} cx={x} cy={y} r="3.4" fill="#c4161c" fillOpacity=".55" />)}
      {BLUE.map(([x, y], i) => <circle key={i} cx={x} cy={y} r="3.4" fill="#6482cc" fillOpacity=".93" />)}
    </svg>
  );
}

function MapPanel() {
  return (
    <Panel title="Country Comparison">
      <div className="relative mt-[1px] h-[224px] w-[775px]">
        <WorldMap />
        <div className="absolute top-[6px] left-[6px] flex w-[14px] flex-col gap-[1px] text-center text-[11px] leading-[14px] font-bold text-[#555]">
          <span className="h-[14px] rounded-t-[1px] bg-white">+</span>
          <span className="h-[15px] rounded-b-[1px] bg-white">−</span>
        </div>
        <div className="absolute bottom-[5px] left-[6px] w-[113px] bg-[#f4f6f5] text-[10.5px] tracking-[0.11px] text-[#35393d]">
          {[["Total Wine", "bg-[#a9caa5]"], ["wine.com", "bg-[#e39ba3]"], ["Vivino", "bg-[#86b0f5]"]].map(([name, dot]) => (
            <div key={name} className="flex h-[51px] flex-col border-b border-[#9a9c9c] pt-[6px] pl-[6px]">
              <span className="leading-[15px]">{name}</span>
              <span className={"mt-[6px] ml-[9px] h-[11px] w-[11px] rounded-full " + dot} />
            </div>
          ))}
        </div>
        <div className="absolute right-[6px] bottom-[5px] h-[15px] w-[14px] rounded-[1px] bg-white text-center text-[11px] leading-[14px] font-bold text-[#666]">i</div>
      </div>
    </Panel>
  );
}

/* ---------- data tables ---------- */

function DataTable({ title, metric, rows, indent, bodyClass, metricClass }) {
  return (
    <Panel title={title} indent={indent}>
      <div className={"h-[158px] overflow-hidden text-[10.5px] tracking-[0.11px] text-[#35393d] " + bodyClass}>
        <div className="grid h-[29px] grid-cols-4 items-center border-b-2 border-[#e4e6e6] pt-[6px] font-medium">
          <span className="pl-[4.5px]">brand</span>
          <span className="pl-[4.5px]">distributor</span>
          <span className="pl-[4.5px]">link</span>
          <span className={"text-right " + metricClass}>{metric}</span>
        </div>
        {rows.map((r, i) => (
          <div key={i} className="grid h-[27px] grid-cols-4 border-b border-[#d9dbdb]">
            {r.map((c, j) => (
              <span key={j} className={j < 3 ? "overflow-hidden border-r border-[#d9dbdb] pl-[4.5px] leading-[25px] whitespace-nowrap" : "pr-[4.5px] text-right leading-[25px]"}>
                {c}
              </span>
            ))}
          </div>
        ))}
      </div>
      <Handle />
    </Panel>
  );
}

const RATING = [
  ["L'Harmonie de Fonbadet", "Total Wine", "https://www.totalwine.com/wine/p/212622011", 5],
  ["Chateau Lilian Ladouys", "Total Wine", "https://www.totalwine.com/wine/p/364217500", 5],
  ["Domaine Laurent Dufouleur", "Total Wine", "https://www.totalwine.com/wine/p/212623390", 5],
  ["Chateau Mancedre", "Total Wine", "https://www.totalwine.com/wine/p/244331750", 5],
  ["Dulong", "Total Wine", "https://www.totalwine.com/wine/p/2432437", 5],
];
const PRICE = [
  ["Domaine de la Romanee-Conti", "wine.com", "https://www.wine.com/product/792036", 8000],
  ["Domaine de la Romanee-Conti", "wine.com", "https://www.wine.com/product/951056", 6999],
  ["Domaine de la Romanee-Conti", "wine.com", "https://www.wine.com/product/951051", 4000],
  ["Domaine Dugat-Py", "wine.com", "https://www.wine.com/product/137684", 3750],
  ["Chateau Rayas", "wine.com", "https://www.wine.com/product/100210", 3000],
];

export default function App() {
  return (
    <main className="h-[934px] w-[1895px] overflow-hidden border-t border-[#e0e1e1] bg-[#f4f6f5] pr-[10px] pl-[13px] font-['Inter',sans-serif] leading-normal">
      <Toolbar />
      <div className="mt-[11px] mb-[7px]">
        <RowTitle>Feature Comparison Across All Distributors</RowTitle>
      </div>
      <div className="grid h-[136px] grid-cols-[697px_385px_385px_385px] gap-[6.5px]">
        <Messages />
        <Stat label="total_distributors" value="3" valueClass="ml-[7px] text-[98px] tracking-[-0.01em]" />
        <Stat label="total_brands" value="2437" valueClass="ml-[5px] text-[42px] tracking-[-0.01em]" />
        <Stat label="total_skus" value="6042" valueClass="ml-[6px] text-[42px] tracking-[-0.01em]" />
      </div>
      <div className="mt-[6px] grid h-[222px] grid-cols-[464px_1011px_385px] gap-[6px]">
        <DistributorChart />
        <BrandPriceChart />
        <SizePie />
      </div>
      <div className="mt-[6px] grid h-[251px] grid-cols-[776px_1090px] gap-[6px]">
        <MapPanel />
        <SkuChart />
      </div>
      <div className="mt-[6px] grid h-[194px] grid-cols-[933px_933px] gap-[6px]">
        <DataTable title="Top Product Rating" bodyClass="mx-[6px]" metric="avg_rating" metricClass="pr-[7.5px]" rows={RATING} />
        <DataTable title="Top Product by Price" indent="pl-[7px]" bodyClass="mr-[5.5px] ml-[6.5px]" metric="avg_price" metricClass="pr-[7.5px]" rows={PRICE} />
      </div>
      <div className="mt-[4px] mb-[6px]">
        <RowTitle>Total Wine Distributor</RowTitle>
      </div>
      <div className="flex justify-end gap-[7.5px]">
        <div className="h-[112px] w-[306px] rounded-[2px] border-2 border-[#a3c7a0] bg-[#429843]" />
        <div className="h-[112px] w-[306px] rounded-[2px] border-2 border-[#a3c7a0] bg-[#429843]" />
        <div className="h-[112px] w-[306px] rounded-[2px] border-2 border-[#a3c7a0] bg-[#429843]" />
      </div>
    </main>
  );
}
